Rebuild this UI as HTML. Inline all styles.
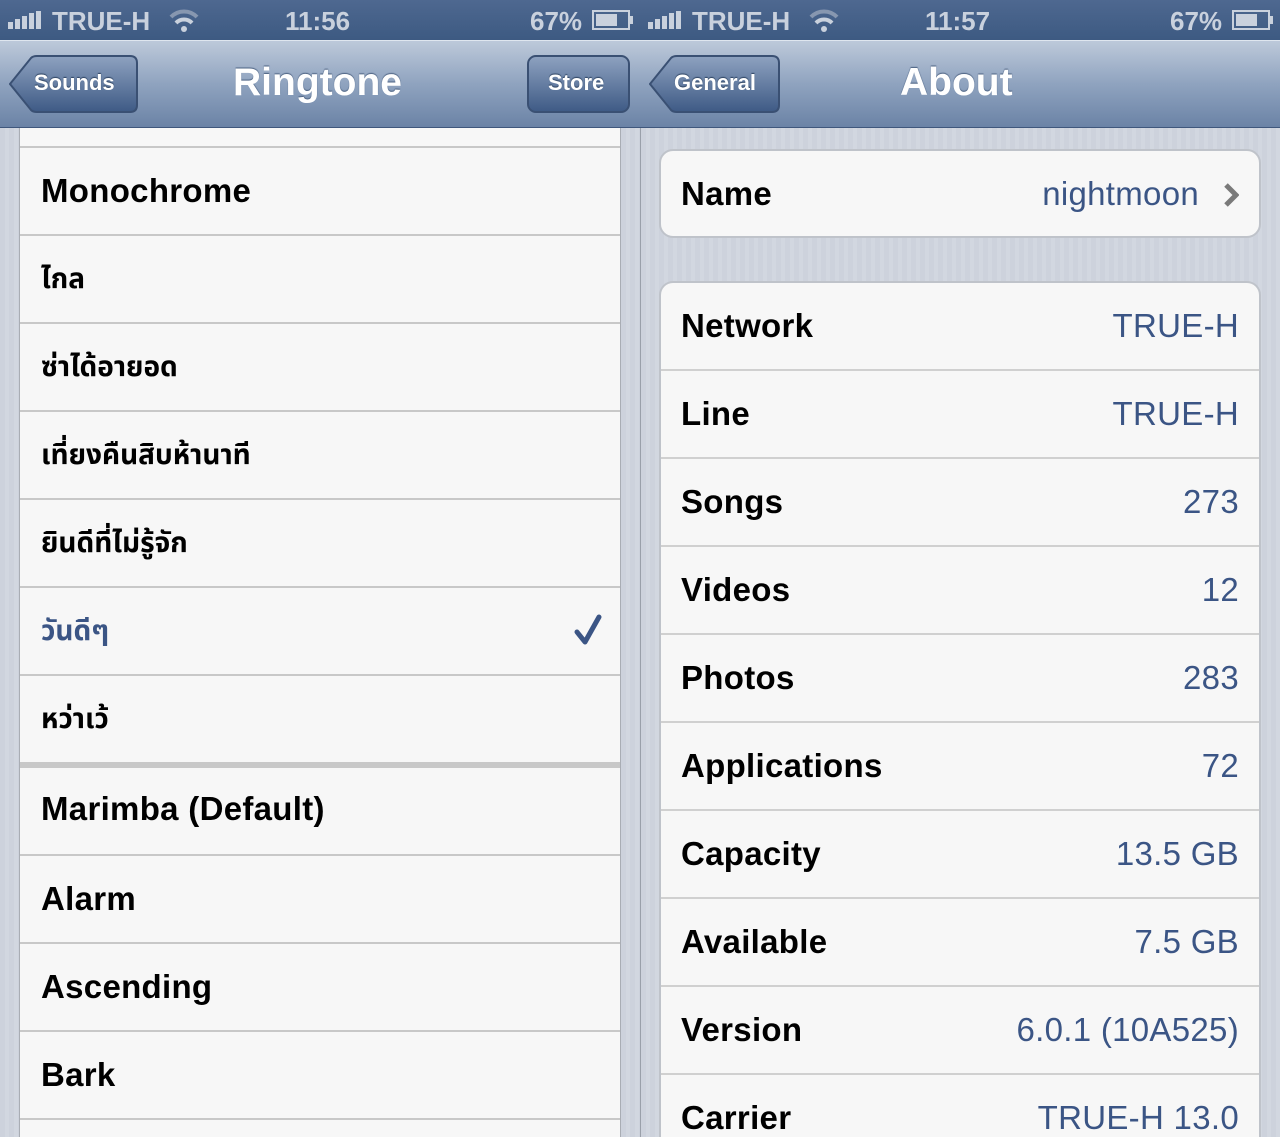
<!DOCTYPE html>
<html style="width:1280px;height:1137px;overflow:hidden"><head><meta charset="utf-8">
<style>
*{margin:0;padding:0;box-sizing:border-box}
body{width:1280px;height:1137px;overflow:hidden;position:relative;font-family:"Liberation Sans",sans-serif;background:#cbd0da}
.abs{position:absolute}
.status{top:0;height:40px;background:linear-gradient(#4e6890,#3d5a82);color:#c9d1dd;font-weight:bold;font-size:26px}
.nav{top:40px;height:88px;background:linear-gradient(#bdc9da,#8fa3bf 50%,#6b83a6);border-top:1px solid #dfe6ef;border-bottom:1px solid #3f577c}
.title{color:#fff;font-weight:bold;font-size:39px;text-shadow:0 -1px 1px #4a6080;top:20px}
.btn{color:#fff;font-weight:bold;font-size:22px;text-shadow:0 -1px 1px #2c4260}
.stripe{background:repeating-linear-gradient(90deg,#cdd2dc 0,#cdd2dc 5px,#d2d7e0 5px,#d2d7e0 9px)}
.list{left:19px;width:602px;background:#f7f7f7;border-left:1px solid #a9adb4;border-right:1px solid #a9adb4}
.row{position:absolute;left:0;width:100%;height:88px;border-top:2px solid #c8c8c8;font-size:33px;font-weight:bold;padding-left:21px;line-height:86px;color:#000;letter-spacing:0.3px}
.thai{font-family:"Liberation Sans","Noto Sans Thai","Loma","Garuda",sans-serif;font-size:28px;letter-spacing:0}
.group{left:659px;width:602px;background:#f7f7f7;border:2px solid #bfc3ca;border-radius:14px}
.r2{position:absolute;left:0;width:100%;height:88px;border-top:2px solid #d0d0d0;padding:0 20px;line-height:86px;font-size:33px;font-weight:bold;letter-spacing:0.3px}
.r2 span{position:absolute;right:20px;font-weight:normal;color:#3b5585}
</style></head><body>
<!-- LEFT -->
<div class="abs stripe" style="left:0;top:128px;width:640px;height:1009px"></div>
<div class="abs status" style="left:0;width:640px">
 <svg class="abs" style="left:8px;top:11px" width="40" height="18"><rect x="0" y="11" width="5" height="7" fill="#c9d1dd"/><rect x="7" y="8" width="5" height="10" fill="#c9d1dd"/><rect x="14" y="5" width="5" height="13" fill="#c9d1dd"/><rect x="21" y="2" width="5" height="16" fill="#c9d1dd"/><rect x="28" y="0" width="5" height="18" fill="#c9d1dd"/></svg>
 <div class="abs" style="left:52px;top:6px">TRUE-H</div>
 <svg class="abs" style="left:168px;top:8px" width="32" height="24"><path d="M3 9 A18 18 0 0 1 29 9" stroke="#8797b0" stroke-width="4" fill="none"/><path d="M8 15 A11 11 0 0 1 24 15" stroke="#c9d1dd" stroke-width="4" fill="none"/><circle cx="16" cy="21" r="3" fill="#c9d1dd"/></svg>
 <div class="abs" style="left:285px;top:6px">11:56</div>
 <div class="abs" style="left:530px;top:6px">67%</div>
 <svg class="abs" style="left:592px;top:10px" width="44" height="20"><rect x="1" y="1" width="36" height="18" fill="none" stroke="#c9d1dd" stroke-width="2"/><rect x="4" y="4" width="21" height="12" fill="#c9d1dd"/><rect x="38" y="6" width="3" height="8" fill="#c9d1dd"/></svg>
</div>
<div class="abs nav" style="left:0;width:640px">
 <svg class="abs" style="left:9px;top:14px" width="130" height="60"><defs><linearGradient id="bg1" x1="0" y1="0" x2="0" y2="1"><stop offset="0" stop-color="#8ea2c0"/><stop offset="1" stop-color="#3e5a85"/></linearGradient></defs><path d="M1 29 L22 3 Q24 1 28 1 H121 Q128 1 128 8 V50 Q128 57 121 57 H28 Q24 57 22 55 Z" fill="url(#bg1)" stroke="#3a5073" stroke-width="2"/></svg>
 <div class="abs btn" style="left:34px;top:29px">Sounds</div>
 <div class="abs title" style="left:233px">Ringtone</div>
 <svg class="abs" style="left:527px;top:14px" width="104" height="60"><defs><linearGradient id="bg2" x1="0" y1="0" x2="0" y2="1"><stop offset="0" stop-color="#8ea2c0"/><stop offset="1" stop-color="#3e5a85"/></linearGradient></defs><rect x="1" y="1" width="101" height="56" rx="8" fill="url(#bg2)" stroke="#3a5073" stroke-width="2"/></svg>
 <div class="abs btn" style="left:548px;top:29px">Store</div>
</div>
<div class="abs list" style="top:128px;height:1009px">
 <div class="row" style="top:18px">Monochrome</div>
 <div class="row thai" style="top:106px">ไกล</div>
 <div class="row thai" style="top:194px">ซ่าได้อายอด</div>
 <div class="row thai" style="top:282px">เที่ยงคืนสิบห้านาที</div>
 <div class="row thai" style="top:370px">ยินดีที่ไม่รู้จัก</div>
 <div class="row thai" style="top:458px;color:#3b5585">วันดีๆ<svg class="abs" style="right:18px;top:26px" width="28" height="32"><path d="M3 18 L11 28 L25 3" stroke="#3b5585" stroke-width="5" fill="none" stroke-linecap="round" stroke-linejoin="round"/></svg></div>
 <div class="row thai" style="top:546px">หว่าเว้</div>
 <div class="row" style="top:634px;border-top:6px solid #c8c8c8;line-height:82px;height:88px">Marimba (Default)</div>
 <div class="row" style="top:726px">Alarm</div>
 <div class="row" style="top:814px">Ascending</div>
 <div class="row" style="top:902px">Bark</div>
 <div class="row" style="top:990px;height:19px"></div>
</div>
<!-- RIGHT -->
<div class="abs stripe" style="left:640px;top:128px;width:640px;height:1009px;border-left:1px solid #9aa0aa"></div>
<div class="abs status" style="left:640px;width:640px">
 <svg class="abs" style="left:8px;top:11px" width="40" height="18"><rect x="0" y="11" width="5" height="7" fill="#c9d1dd"/><rect x="7" y="8" width="5" height="10" fill="#c9d1dd"/><rect x="14" y="5" width="5" height="13" fill="#c9d1dd"/><rect x="21" y="2" width="5" height="16" fill="#c9d1dd"/><rect x="28" y="0" width="5" height="18" fill="#c9d1dd"/></svg>
 <div class="abs" style="left:52px;top:6px">TRUE-H</div>
 <svg class="abs" style="left:168px;top:8px" width="32" height="24"><path d="M3 9 A18 18 0 0 1 29 9" stroke="#8797b0" stroke-width="4" fill="none"/><path d="M8 15 A11 11 0 0 1 24 15" stroke="#c9d1dd" stroke-width="4" fill="none"/><circle cx="16" cy="21" r="3" fill="#c9d1dd"/></svg>
 <div class="abs" style="left:285px;top:6px">11:57</div>
 <div class="abs" style="left:530px;top:6px">67%</div>
 <svg class="abs" style="left:592px;top:10px" width="44" height="20"><rect x="1" y="1" width="36" height="18" fill="none" stroke="#c9d1dd" stroke-width="2"/><rect x="4" y="4" width="21" height="12" fill="#c9d1dd"/><rect x="38" y="6" width="3" height="8" fill="#c9d1dd"/></svg>
</div>
<div class="abs nav" style="left:640px;width:640px">
 <svg class="abs" style="left:9px;top:14px" width="134" height="60"><defs><linearGradient id="bg3" x1="0" y1="0" x2="0" y2="1"><stop offset="0" stop-color="#8ea2c0"/><stop offset="1" stop-color="#3e5a85"/></linearGradient></defs><path d="M1 29 L22 3 Q24 1 28 1 H123 Q130 1 130 8 V50 Q130 57 123 57 H28 Q24 57 22 55 Z" fill="url(#bg3)" stroke="#3a5073" stroke-width="2"/></svg>
 <div class="abs btn" style="left:34px;top:29px">General</div>
 <div class="abs title" style="left:260px">About</div>
</div>
<div class="abs group" style="top:149px;height:89px">
 <div class="r2" style="top:0;border-top:none;line-height:86px">Name<span style="right:60px">nightmoon</span>
 <svg class="abs" style="right:20px;top:32px" width="16" height="24"><path d="M3 2 L13 12 L3 22" stroke="#7a7a7a" stroke-width="5" fill="none"/></svg></div>
</div>
<div class="abs group" style="top:281px;height:856px;border-bottom:none;border-radius:14px 14px 0 0">
 <div class="r2" style="top:0;border-top:none">Network<span>TRUE-H</span></div>
 <div class="r2" style="top:86px">Line<span>TRUE-H</span></div>
 <div class="r2" style="top:174px">Songs<span>273</span></div>
 <div class="r2" style="top:262px">Videos<span>12</span></div>
 <div class="r2" style="top:350px">Photos<span>283</span></div>
 <div class="r2" style="top:438px">Applications<span>72</span></div>
 <div class="r2" style="top:526px">Capacity<span>13.5 GB</span></div>
 <div class="r2" style="top:614px">Available<span>7.5 GB</span></div>
 <div class="r2" style="top:702px">Version<span>6.0.1 (10A525)</span></div>
 <div class="r2" style="top:790px;height:64px">Carrier<span>TRUE-H 13.0</span></div>
</div>
</body></html>
